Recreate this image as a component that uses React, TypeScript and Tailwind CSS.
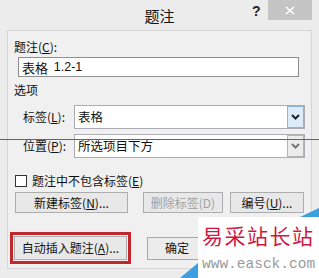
import React from "react";

const cjk = "font-['Microsoft_YaHei','Noto_Sans_CJK_SC',sans-serif]";

function Chevron({ color }: { color: string }) {
  return (
    <svg width="9" height="6" viewBox="0 0 9 6">
      <path d="M1 1 L4.5 4.5 L8 1" stroke={color} strokeWidth="2" fill="none" />
    </svg>
  );
}

function Select({ text, active }: { text: string; active?: boolean }) {
  return (
    <div className="flex h-[24px] w-[231px] items-stretch border border-[#abadb3] bg-white">
      <div className="flex flex-1 items-center pl-[3px] text-[12.5px] leading-none text-[#111]">{text}</div>
      <div
        className={
          active
            ? "flex w-[17px] items-center justify-center border border-[#8fb4d6] bg-[#dcecf8]"
            : "flex w-[17px] items-center justify-center border border-[#b5b5b5] bg-[#ececec]"
        }
      >
        <Chevron color={active ? "#222" : "#777"} />
      </div>
    </div>
  );
}

function Btn({ children, w, disabled }: { children: React.ReactNode; w: string; disabled?: boolean }) {
  return (
    <div
      className={`flex h-[21px] items-center justify-center border border-[#adadad] bg-[#e8e8e8] text-[12px] leading-none ${w} ${
        disabled ? "text-[#a0a0a0]" : "text-[#111]"
      }`}
    >
      {children}
    </div>
  );
}

export default function App() {
  return (
    <div className={`relative h-[278px] w-[319px] overflow-hidden bg-[#ececec] ${cjk}`}>
      {/* title bar */}
      <div className="relative flex h-[30px] items-start justify-center">
        <div className="mt-[7px] text-[15px] leading-[17px] text-[#111]">题注</div>
        <div className="absolute left-[252px] top-[3px] font-['Liberation_Sans',sans-serif] text-[14px] font-bold leading-[16px] text-[#222]">
          ?
        </div>
        <div className="absolute left-[268px] top-0 flex h-[20px] w-[44px] items-center justify-center bg-[#c4c4c4]">
          <svg width="10" height="9" viewBox="0 0 10 9">
            <path d="M1 1 L9 8 M9 1 L1 8" stroke="#fff" strokeWidth="1.6" />
          </svg>
        </div>
      </div>

      {/* dialog body */}
      <div className="ml-[7px] h-[238px] w-[305px] border border-b-0 border-[#d6d6d6] bg-[#f0f0f0] pt-[8px] pl-[6px]">
        <div className="text-[12px] leading-[16px] text-[#111]">
          题注(<span className="underline">C</span>):
        </div>
        <div className="ml-[4px] mt-[2px] flex h-[20px] w-[281px] items-center border border-[#8f8f8f] bg-white pl-[3px] text-[13px] leading-none text-[#111]">
          表格&nbsp;&nbsp;<span className="font-['Liberation_Sans',sans-serif] text-[12.5px]">1.2-1</span>
        </div>
        <div className="mt-[5px] text-[12px] leading-[16px] text-[#111]">选项</div>

        <div className="mt-[7px] flex items-center">
          <div className="ml-[9px] w-[51px] text-[12px] leading-none text-[#111]">
            标签(<span className="underline">L</span>):
          </div>
          <Select text="表格" active />
        </div>
        <div className="mt-[5px] flex items-center">
          <div className="ml-[9px] w-[51px] text-[12px] leading-none text-[#111]">
            位置(<span className="underline">P</span>):
          </div>
          <Select text="所选项目下方" />
        </div>

        <div className="mt-[15px] flex h-[16px] items-center">
          <div className="ml-[1px] h-[12px] w-[12px] border border-[#333] bg-white" />
          <div className="ml-[5px] text-[12px] leading-none text-[#111]">
            题注中不包含标签(<span className="underline">E</span>)
          </div>
        </div>

        <div className="mt-[3px] flex items-center">
          <div className="ml-[1px]">
            <Btn w="w-[113px]">
              新建标签(<span className="underline">N</span>)...
            </Btn>
          </div>
          <div className="ml-[15px]">
            <Btn w="w-[80px]" disabled>
              删除标签(D)
            </Btn>
          </div>
          <div className="ml-[7px]">
            <Btn w="w-[74px]">
              编号(<span className="underline">U</span>)...
            </Btn>
          </div>
        </div>

        <div className="mt-[19px] flex items-center">
          <div className="-ml-[4px] border-[3px] border-[#c0282d] p-[1px]">
            <div className="flex h-[24px] w-[113px] items-center justify-center border border-[#adadad] bg-[#e8e8e8] text-[12px] leading-none text-[#111]">
              自动插入题注(<span className="underline">A</span>)...
            </div>
          </div>
          <div className="ml-[16px] flex h-[23px] w-[80px] items-center border border-[#9fa9b4] bg-[#ececec] pl-[17px] text-[12px] leading-none text-[#111]">
            确定
          </div>
        </div>
      </div>
      <div className="ml-[7px] w-[305px] border-t border-[#d6d6d6]" />

      {/* red annotation line */}
      <div className="absolute left-0 top-[139px] h-[1px] w-[319px] bg-[#d8333a]" />

      {/* watermark */}
      <svg className="absolute left-0 top-0" width="319" height="278" viewBox="0 0 319 278">
        <polygon points="198,217 319,217 319,278 198,278" fill="#ffffff" />
        <polygon points="300,217 319,208 319,217" fill="#3d9ee0" />
        <polygon points="180,278 198,263 198,278" fill="#3d9ee0" />
      </svg>
      <div className="absolute left-[202px] top-[223px] whitespace-nowrap font-['Noto_Sans_CJK_SC',sans-serif] text-[21px] leading-[24px] tracking-[1.5px] text-[#d0173f]">
        易采站长站
      </div>
      <div className="absolute left-[202px] top-[256px] whitespace-nowrap font-['Liberation_Mono',monospace] text-[14.5px] leading-[16px] text-[#9a9a9a]">
        www.easck.com
      </div>
    </div>
  );
}
